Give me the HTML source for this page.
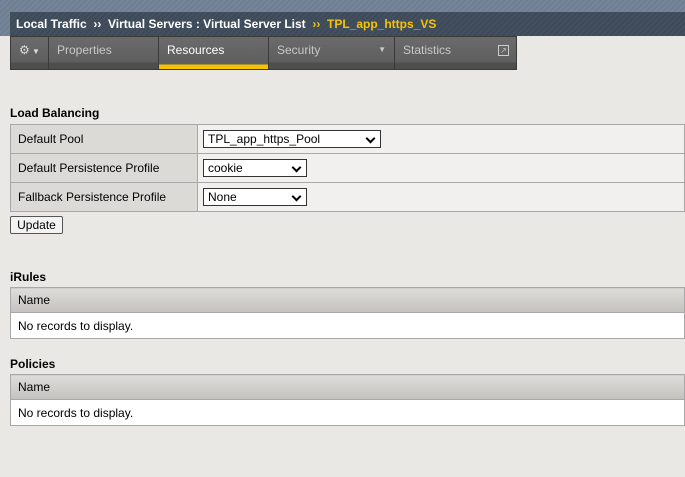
<!DOCTYPE html>
<html><head><style>
body{margin:0;width:685px;height:477px;background:#e9e8e5;font-family:"Liberation Sans",Arial,sans-serif;font-size:12px;color:#000;position:relative;overflow:hidden}
.a{position:absolute}
.top{left:0;top:0;width:685px;height:36px;background:repeating-linear-gradient(135deg,#6f7f91 0 2px,#76869a 2px 4px)}
.bc{left:10px;top:12px;width:675px;height:24px;background:repeating-linear-gradient(135deg,#3e4a58 0 2px,#435060 2px 4px);color:#fff;font-weight:bold;font-size:12px;line-height:24px;padding-left:6px;box-sizing:border-box}
.bc .y{color:#f5c400}
.tabs{left:10px;top:36px;width:507px;height:34px;background:#3a3a3a}
.tab{position:absolute;top:1px;height:32px;background:linear-gradient(#6b6b6b,#5e5e5e 80%,#4e4e4e 80%);color:#c8c8c8;font-size:12px;line-height:26px;padding-left:8px;box-sizing:border-box}
.h{font-weight:bold;font-size:12px;position:absolute;left:10px}
table{border-collapse:collapse;position:absolute;left:10px;width:675px}
td{border:1px solid #a8a8a8;padding:0 7px;height:28px}
.lab{background:#dcdad6;width:172px}
.val{background:#f1f0ee;padding-left:5px}
.sel{display:inline-block;border:1px solid #333;background:#fff;height:16px;line-height:16px;padding-left:4px;box-sizing:border-box;position:relative;height:18px;font-size:12px}
.sel:after{content:"";position:absolute;right:6px;top:4px;width:5px;height:5px;border-right:2px solid #000;border-bottom:2px solid #000;transform:rotate(45deg)}
.hd td{background:linear-gradient(#dedcd9,#c4c2be);height:24px}
.rw td{background:#fff;height:25px}
</style></head><body>
<div class="a top"></div>
<div class="a bc">Local Traffic &nbsp;›› &nbsp;Virtual Servers : Virtual Server List &nbsp;<span class="y">›› &nbsp;TPL_app_https_VS</span></div>
<div class="a tabs">
<div class="tab" style="left:1px;width:37px;color:#ddd">&#9881;<span style="font-size:8px"> ▼</span></div>
<div class="tab" style="left:39px;width:109px">Properties</div>
<div class="tab" style="left:149px;width:109px;color:#fff;background:linear-gradient(#6b6b6b,#5e5e5e 86%,#f5c400 86%)">Resources</div>
<div class="tab" style="left:259px;width:125px">Security<span style="position:absolute;right:8px;font-size:8px">▼</span></div>
<div class="tab" style="left:385px;width:121px">Statistics<span style="position:absolute;right:7px;top:8px;width:9px;height:9px;border:1px solid #ccc;line-height:9px;font-size:8px;text-align:center">↗</span></div>
</div>
<div class="h" style="top:106px">Load Balancing</div>
<table style="top:124px">
<tr><td class="lab">Default Pool</td><td class="val"><span class="sel" style="width:178px">TPL_app_https_Pool</span></td></tr>
<tr><td class="lab">Default Persistence Profile</td><td class="val"><span class="sel" style="width:104px">cookie</span></td></tr>
<tr><td class="lab">Fallback Persistence Profile</td><td class="val"><span class="sel" style="width:104px">None</span></td></tr>
</table>
<div class="a" style="left:10px;top:216px;width:53px;height:18px;border:1px solid #555;background:#f3f3f3;box-sizing:border-box;text-align:center;line-height:16px;border-radius:2px">Update</div>
<div class="h" style="top:270px">iRules</div>
<table style="top:287px"><tr class="hd"><td>Name</td></tr><tr class="rw"><td>No records to display.</td></tr></table>
<div class="h" style="top:357px">Policies</div>
<table style="top:374px"><tr class="hd"><td>Name</td></tr><tr class="rw"><td>No records to display.</td></tr></table>
</body></html>
